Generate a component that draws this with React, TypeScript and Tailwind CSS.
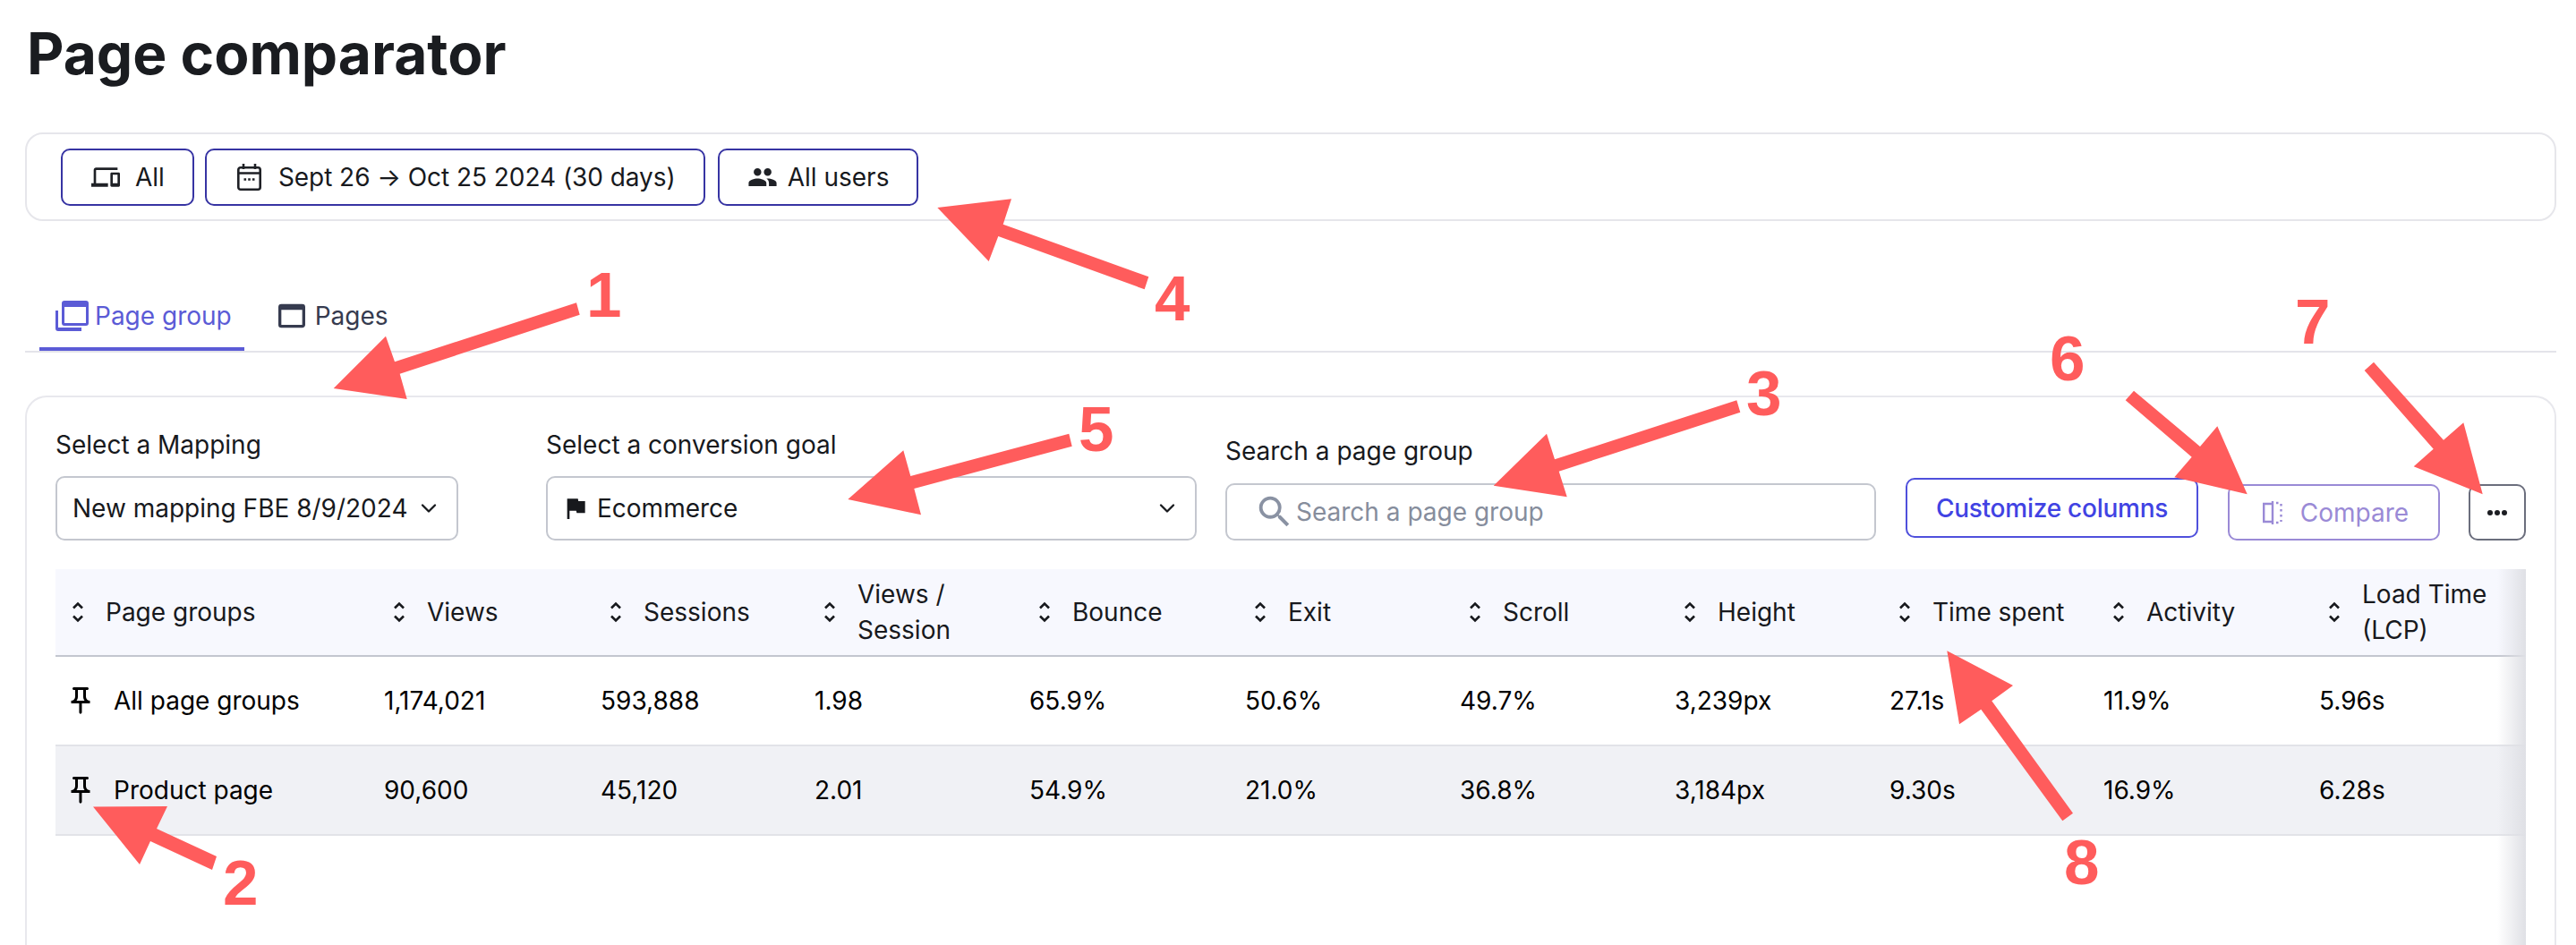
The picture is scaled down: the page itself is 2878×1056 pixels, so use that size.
import { ChevronDown } from "lucide-react";
import { MdFlag, MdOutlineDevices, MdOutlinePushPin, MdOutlineWebAsset, MdPeople, MdSearch } from "react-icons/md";

const gridCols = "grid grid-cols-[351px_242px_239px_240px_241px_240px_240px_240px_239px_241px_247px]";

const columns = [
  ["Page groups"],
  ["Views"],
  ["Sessions"],
  ["Views /", "Session"],
  ["Bounce"],
  ["Exit"],
  ["Scroll"],
  ["Height"],
  ["Time spent"],
  ["Activity"],
  ["Load Time", "(LCP)"],
];

const rows = [
  ["All page groups", "1,174,021", "593,888", "1.98", "65.9%", "50.6%", "49.7%", "3,239px", "27.1s", "11.9%", "5.96s"],
  ["Product page", "90,600", "45,120", "2.01", "54.9%", "21.0%", "36.8%", "3,184px", "9.30s", "16.9%", "6.28s"],
];

// red annotation arrows, traced from the screenshot
const arrows = [
  "372.7,434 431,375.7 441,404.3 644,338.3 647.7,351.7 446.7,417.7 454.7,446",
  "104,901.5 187,901 175,926 242,957 237,972 168,940 156,966",
  "1668.7,542.7 1728,484.7 1737,513.3 1940.3,447.3 1944.3,460.7 1741.7,526.7 1750.7,555.3",
  "1047.3,232 1130,222.3 1120.7,250.7 1283.3,309.3 1278.7,323.3 1115.3,264 1104.7,292",
  "947.3,558 1009.3,503.3 1017.3,532 1194.3,484.7 1197.7,498.7 1021.3,546 1029,575.3",
  "2510.7,552.3 2477.3,476.3 2458,499 2384,436.7 2374.7,447.3 2448.7,510.7 2429.3,533.3",
  "2773.7,552.3 2752.3,472.3 2730,491.7 2652,404.7 2641.7,414 2718.7,501.7 2696.7,521.3",
  "2175.3,727.3 2249,766 2225.3,783.3 2316,908.7 2304.3,917.3 2213.3,792.7 2189,809.3",
];

function SortIcon() {
  return (
    <svg width="14" height="24" viewBox="0 0 14 24" fill="none" stroke="currentColor" strokeWidth="2.6" className="shrink-0">
      <path d="M2 7.5 7 2.5l5 5" />
      <path d="M2 16.5l5 5 5-5" />
    </svg>
  );
}

function PageGroupIcon() {
  return (
    <svg width="37" height="34" viewBox="0 0 37 34" fill="#5b5bd6" className="shrink-0">
      <path d="M10 0h24a3 3 0 0 1 3 3v22a3 3 0 0 1-3 3H10a3 3 0 0 1-3-3V3a3 3 0 0 1 3-3zm0 7v18h24V7z" fillRule="evenodd" />
      <path d="M0 11h3v19h26v4H3a3 3 0 0 1-3-3z" />
    </svg>
  );
}

function CalendarIcon() {
  return (
    <svg width="27" height="30" viewBox="0 0 27 30" fill="none" stroke="#1f2126" strokeWidth="2.6" className="shrink-0">
      <rect x="1.3" y="4.3" width="24.4" height="24.4" rx="2.5" />
      <path d="M1.3 10.5h24.4M7 0v6M20 0v6" />
      <path d="M7.5 17.5h2.6M12.2 17.5h2.6M16.9 17.5h2.6" strokeWidth="2.6" />
    </svg>
  );
}

function CompareIcon() {
  return (
    <svg width="22" height="26" viewBox="0 0 22 26" fill="none" stroke="#9a8ad6" strokeWidth="2.4" className="shrink-0">
      <path d="M11 3H1.2v20H11M11 0v26" />
      <path d="M15 2h2.5M20.5 3v2.5M20.5 9v2.5M20.5 15v2.5M20.5 21v2M15 24h2.5" />
    </svg>
  );
}

export default function App() {
  return (
    <div className="relative flex h-[1056px] flex-col overflow-hidden bg-white pl-[28px] pr-[22px] font-['Inter',sans-serif] text-[28px] text-[#17191d]">
      <h1 className="pl-[2px] pt-[24px] text-[64px] leading-[72px] font-bold text-[#1a1c20]">Page comparator</h1>

      {/* filters */}
      <div className="mt-[52px] flex gap-[12px] rounded-[20px] border-2 border-[#e6e6eb] pb-[15px] pl-[38px] pt-[16px]">
        <button className="flex h-[64px] items-center gap-[17px] rounded-[10px] border-2 border-[#3734a3] pl-[32px] pr-[31px]">
          <MdOutlineDevices size={32} color="#1f2126" />
          <span>All</span>
        </button>
        <button className="flex h-[64px] items-center gap-[19px] rounded-[10px] border-2 border-[#3734a3] pl-[34px] pr-[31px] tracking-[-0.05px]">
          <CalendarIcon />
          <span>Sept 26 → Oct 25 2024 (30 days)</span>
        </button>
        <button className="ml-[2px] flex h-[64px] items-center gap-[11px] rounded-[10px] border-2 border-[#3734a3] pl-[31px] pr-[31px]">
          <MdPeople size={34} color="#1f2126" />
          <span>All users</span>
        </button>
      </div>

      {/* tabs */}
      <div className="mt-[68px] flex border-b-2 border-[#e4e4ea] pl-[16px]">
        <div className="flex h-[77px] items-center gap-[7px] border-b-4 border-[#5b5bd6] pl-[18px] pr-[14px] pt-[3px] text-[#5b5bd6]">
          <PageGroupIcon />
          <span>Page group</span>
        </div>
        <div className="flex h-[77px] items-center gap-[6px] border-b-4 border-transparent pl-[33px] pt-[3px] text-[#363b4f]">
          <MdOutlineWebAsset size={40} color="#363b4f" />
          <span>Pages</span>
        </div>
      </div>

      {/* main card, runs off the bottom of the page */}
      <div className="mt-[48px] flex flex-1 flex-col rounded-t-[24px] border-2 border-b-0 border-[#e8e8ed] px-[32px] pt-[36px]">
        <div className="flex items-end">
          <div className="w-[450px]">
            <div className="mb-[18px] leading-[34px]">Select a Mapping</div>
            <div className="flex h-[72px] items-center justify-between rounded-[10px] border-2 border-[#c4c7cf] pl-[17px] pr-[17px]">
              <span>New mapping FBE 8/9/2024</span>
              <ChevronDown size={28} strokeWidth={2} />
            </div>
          </div>
          <div className="ml-[98px] w-[727px]">
            <div className="mb-[18px] leading-[34px]">Select a conversion goal</div>
            <div className="flex h-[72px] items-center rounded-[10px] border-2 border-[#c4c7cf] pl-[15px] pr-[17px]">
              <MdFlag size={32} color="#17191d" />
              <span className="ml-[8px]">Ecommerce</span>
              <ChevronDown size={28} strokeWidth={2} className="ml-auto" />
            </div>
          </div>
          <div className="ml-[32px] w-[727px]">
            <div className="mb-[19px] leading-[34px]">Search a page group</div>
            <div className="flex h-[64px] items-center rounded-[10px] border-2 border-[#c4c7cf] pl-[30px]">
              <MdSearch size={46} color="#8a92a3" />
              <span className="ml-[1px] text-[#868d9c]">Search a page group</span>
            </div>
          </div>
          <button className="mb-[3px] ml-[33px] h-[67px] w-[327px] rounded-[10px] border-2 border-[#4f50dc] font-medium tracking-[-0.25px] text-[#4143e3]">
            Customize columns
          </button>
          <button className="ml-[33px] flex h-[63px] w-[237px] items-center justify-center gap-[20px] rounded-[10px] border-2 border-[#9a8ad6] pl-[4px] text-[#9a8ad6]">
            <CompareIcon />
            <span>Compare</span>
          </button>
          <button className="ml-[32px] flex h-[63px] w-[64px] items-center justify-center rounded-[10px] border-2 border-[#6b6e7d]">
            <svg width="22" height="6" viewBox="0 0 22 6" fill="#1c1d22">
              <circle cx="3" cy="3" r="3" />
              <circle cx="11" cy="3" r="3" />
              <circle cx="19" cy="3" r="3" />
            </svg>
          </button>
        </div>

        {/* table */}
        <div className="relative mt-[32px] flex-1">
          <div className={`${gridCols} h-[98px] items-center border-b-2 border-[#c3c6cf] bg-[#f7f8fe]`}>
            {columns.map((col, i) => (
              <div key={col[0]} className={i === 0 ? "flex items-center gap-[24px] pl-[18px] leading-[40px]" : "flex items-center gap-[24px] pl-[26px] leading-[40px]"}>
                <SortIcon />
                <div>
                  {col.map((line) => (
                    <div key={line}>{line}</div>
                  ))}
                </div>
              </div>
            ))}
          </div>
          {rows.map((row, r) => (
            <div key={row[0]} className={r === 1 ? `${gridCols} h-[100px] items-center border-b-2 border-[#e2e3e8] bg-[#f0f1f5] text-black` : `${gridCols} h-[100px] items-center border-b-2 border-[#e2e3e8] text-black`}>
              {row.map((cell, i) =>
                i === 0 ? (
                  <div key={i} className="flex items-center gap-[19px] pl-[10px]">
                    <MdOutlinePushPin size={36} className="shrink-0" />
                    <span>{cell}</span>
                  </div>
                ) : (
                  <div key={i} className="pl-[16px]">
                    {cell}
                  </div>
                ),
              )}
            </div>
          ))}
          {/* scroll shadow on the right edge */}
          <div className="absolute bottom-0 right-0 top-0 w-[32px] bg-gradient-to-r from-transparent to-[#dfe0e5]" />
        </div>
      </div>

      {/* annotations */}
      <svg className="pointer-events-none absolute left-0 top-0" width="2878" height="1056" viewBox="0 0 2878 1056" fill="#ff5c5c">
        {arrows.map((points) => (
          <polygon key={points} points={points} />
        ))}
      </svg>
      <span className="absolute left-[655px] top-[294px] font-['Liberation_Sans',sans-serif] text-[71px] leading-none font-bold text-[#ff5c5c]">1</span>
      <span className="absolute left-[249px] top-[951px] font-['Liberation_Sans',sans-serif] text-[71px] leading-none font-bold text-[#ff5c5c]">2</span>
      <span className="absolute left-[1951px] top-[404px] font-['Liberation_Sans',sans-serif] text-[71px] leading-none font-bold text-[#ff5c5c]">3</span>
      <span className="absolute left-[1290px] top-[298px] font-['Liberation_Sans',sans-serif] text-[71px] leading-none font-bold text-[#ff5c5c]">4</span>
      <span className="absolute left-[1205px] top-[444px] font-['Liberation_Sans',sans-serif] text-[71px] leading-none font-bold text-[#ff5c5c]">5</span>
      <span className="absolute left-[2290px] top-[365px] font-['Liberation_Sans',sans-serif] text-[71px] leading-none font-bold text-[#ff5c5c]">6</span>
      <span className="absolute left-[2564px] top-[324px] font-['Liberation_Sans',sans-serif] text-[71px] leading-none font-bold text-[#ff5c5c]">7</span>
      <span className="absolute left-[2306px] top-[928px] font-['Liberation_Sans',sans-serif] text-[71px] leading-none font-bold text-[#ff5c5c]">8</span>
    </div>
  );
}
